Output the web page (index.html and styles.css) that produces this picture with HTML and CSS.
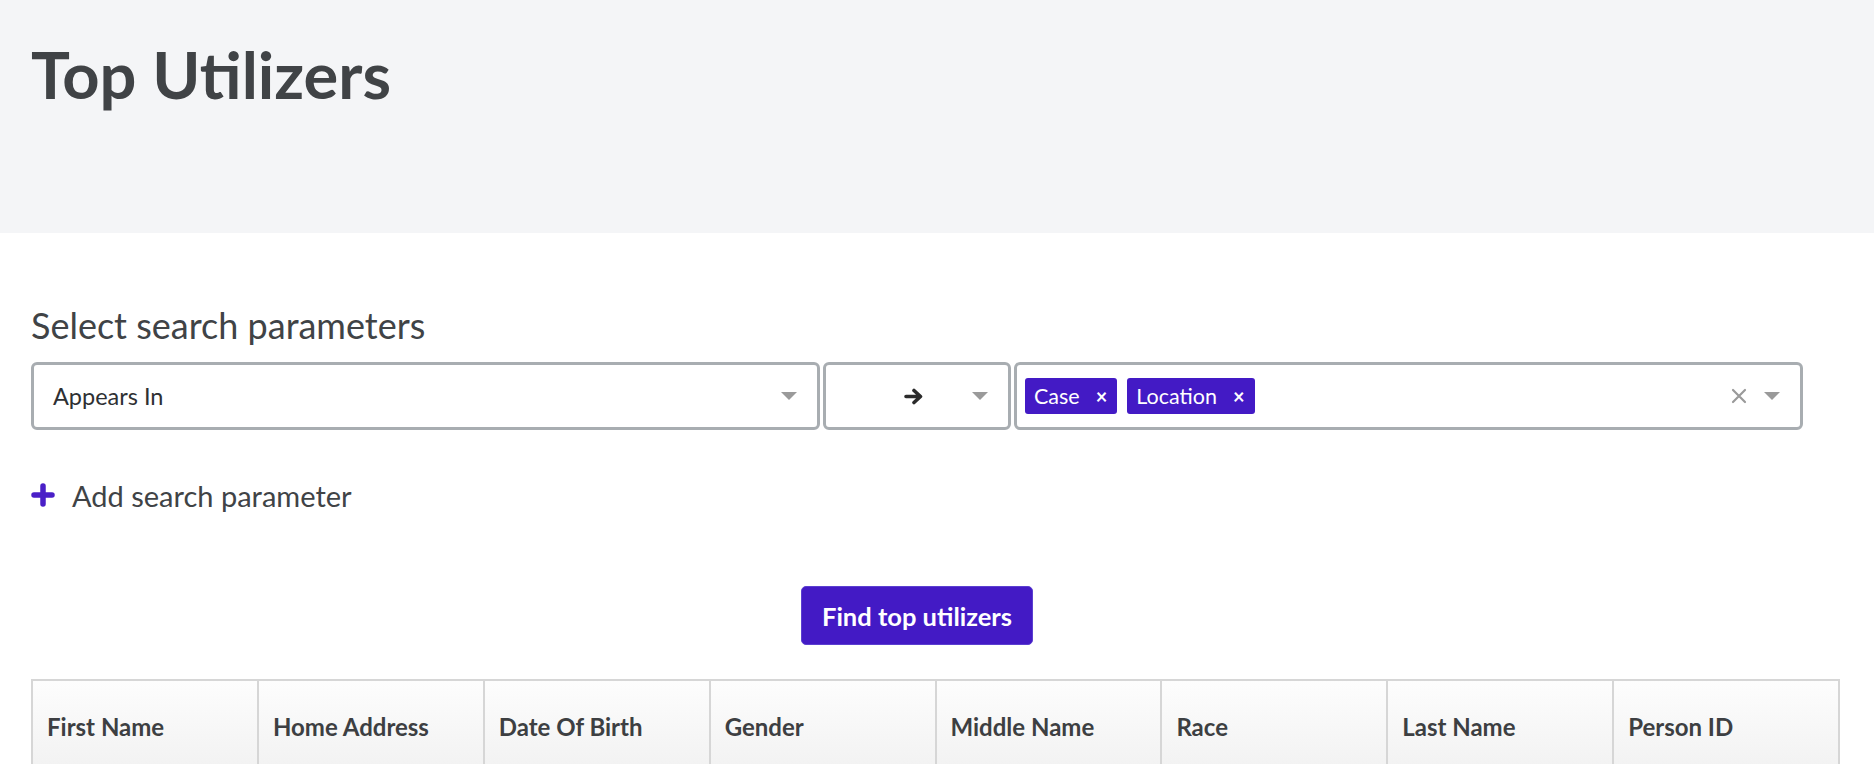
FILE: index.html
```html
<!DOCTYPE html>
<html>
<head>
<meta charset="utf-8">
<link rel="stylesheet" href="styles.css">
</head>
<body>
<header class="page-header">
  <h1 class="title">Top Utilizers</h1>
</header>
<main class="content">
  <h2 class="section-title">Select search parameters</h2>
  <div class="param-row">
    <div class="select">
      <span class="select-value">Appears In</span>
      <span class="caret"></span>
    </div>
    <div class="select select-mid">
      <svg class="arrow-icon" width="20" height="17" viewBox="0 0 20 17"><path d="M2 8.5H16M10 2.5L16.5 8.5L10 14.5" fill="none" stroke="#2b2b2b" stroke-width="3.6" stroke-linecap="round" stroke-linejoin="round"/></svg>
      <span class="caret"></span>
    </div>
    <div class="select select-multi">
      <div class="chips">
        <span class="chip">Case<span class="chip-x">×</span></span>
        <span class="chip">Location<span class="chip-x">×</span></span>
      </div>
      <div class="indicators">
        <svg class="clear-icon" width="16" height="16" viewBox="0 0 16 16"><path d="M2 2L14 14M14 2L2 14" stroke="#9a9a9a" stroke-width="2.2" stroke-linecap="round"/></svg>
        <span class="caret"></span>
      </div>
    </div>
  </div>
  <div class="add-param">
    <svg class="plus-icon" width="24" height="24" viewBox="0 0 24 24"><path d="M12 3V21M3 12H21" stroke="#4a1fc7" stroke-width="5.5" stroke-linecap="round"/></svg>
    <span>Add search parameter</span>
  </div>
  <div class="button-row">
    <button class="find-btn">Find top utilizers</button>
  </div>
  <table class="results">
    <thead>
      <tr>
        <th>First Name</th>
        <th>Home Address</th>
        <th>Date Of Birth</th>
        <th>Gender</th>
        <th>Middle Name</th>
        <th>Race</th>
        <th>Last Name</th>
        <th>Person ID</th>
      </tr>
    </thead>
  </table>
</main>
</body>
</html>
```

FILE: styles.css
```css
html, body {
  margin: 0;
  padding: 0;
  background: #ffffff;
  font-family: Lato, "Open Sans", sans-serif;
  color: #404346;
  overflow: hidden;
}

.page-header {
  height: 233px;
  background: #f4f5f7;
  padding: 0 31px;
  box-sizing: border-box;
  display: flex;
  flex-direction: column;
}

.title {
  margin: 29px 0 0 0;
  font-size: 65px;
  font-weight: 700;
  line-height: 90px;
  color: #404346;
}

.content {
  width: 1772px;
  padding: 0 31px;
  display: flex;
  flex-direction: column;
}

.section-title {
  margin: 66px 0 0 0;
  font-size: 36px;
  font-weight: 400;
  line-height: 52px;
  color: #404346;
}

.param-row {
  margin-top: 11px;
  display: grid;
  grid-template-columns: 789px 188px 789px;
  column-gap: 3px;
}

.select {
  height: 68px;
  box-sizing: border-box;
  border: 3px solid #a8adb1;
  border-radius: 6px;
  display: flex;
  align-items: center;
  justify-content: space-between;
  padding: 0 20px 0 19px;
  background: #fff;
}

.select-value {
  font-size: 23.5px;
  color: #2e3033;
}

.caret {
  width: 0;
  height: 0;
  border-left: 8.5px solid transparent;
  border-right: 8.5px solid transparent;
  border-top: 8.5px solid #9a9a9a;
}

.select-mid {
  padding-left: 78px;
}

.select-multi {
  padding-left: 8px;
}

.chips {
  display: flex;
  gap: 10px;
}

.chip {
  height: 36px;
  box-sizing: border-box;
  background: #431ac5;
  color: #ffffff;
  border-radius: 3px;
  font-size: 21.5px;
  display: flex;
  align-items: center;
  padding: 0 10px 0 9px;
}

.chip-x {
  margin-left: 16px;
  font-size: 20px;
  font-weight: 700;
}

.indicators {
  display: flex;
  align-items: center;
  gap: 17px;
}

.add-param {
  margin-top: 48px;
  display: flex;
  align-items: center;
  gap: 17px;
  font-size: 29px;
  color: #404346;
  height: 34px;
}

.button-row {
  margin-top: 74px;
  display: flex;
  justify-content: center;
}

.find-btn {
  width: 232px;
  height: 59px;
  background: #431ac5;
  color: #ffffff;
  border: 1px solid #5b3fd0;
  border-radius: 5px;
  font-family: Lato, sans-serif;
  font-size: 25.5px;
  font-weight: 700;
  padding: 0;
}

.results {
  margin-top: 34px;
  width: 1809px;
  border-collapse: collapse;
  table-layout: fixed;
}

.results th {
  height: 96px;
  border: 2px solid #d6d6d6;
  background: linear-gradient(#fdfdfd, #ededed);
  text-align: left;
  vertical-align: top;
  padding: 31px 14px 0 14px;
  font-size: 24px;
  font-weight: 700;
  color: #3d3f42;
}
```
